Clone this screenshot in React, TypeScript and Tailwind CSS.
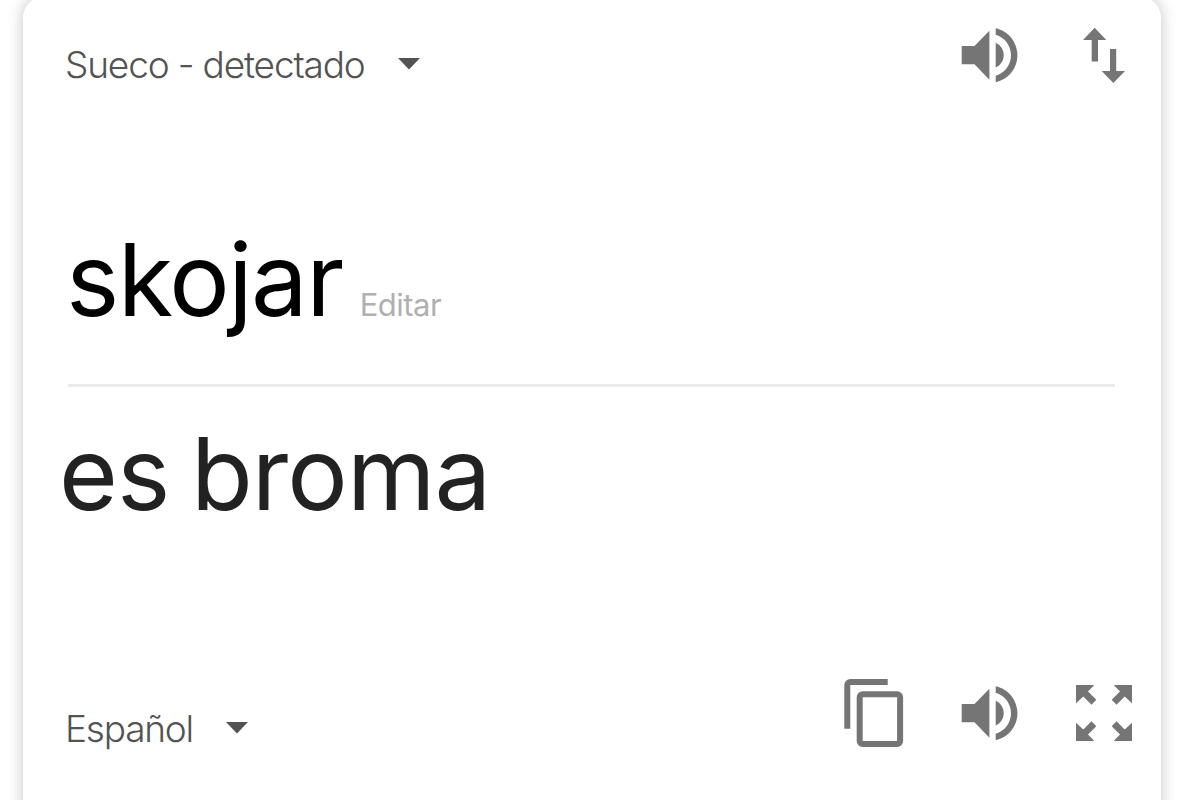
function SpeakerIcon() {
  return (
    <svg viewBox="0 0 60 60" className="h-[60px] w-[60px]" fill="currentColor">
      <path d="M1.7 20.1H14.5L29.4 4.7V53.7L14.5 38.3H1.7z" />
      <path d="M35.7 16.8C40.6 19 43.7 23.7 43.7 29.2S40.6 39.3 35.7 41.4z" />
      <path d="M35.7 2.3C48.2 5 57.4 16 57.4 29.3S48.2 53.5 35.7 56.2V49.7C44.6 47.2 51 39 51 29.3S44.6 11.3 35.7 8.8z" />
    </svg>
  );
}

function SwapIcon() {
  return (
    <svg viewBox="0 0 50 60" className="h-[60px] w-[50px]" fill="currentColor">
      <path d="M14.7 1.7L26.3 14H18V35.5H11.7V14H3z" />
      <path d="M30 23H36.2V45H45L33.3 57L21.7 45H30z" />
    </svg>
  );
}

function CopyIcon() {
  return (
    <svg viewBox="0 0 66 74" className="h-[74px] w-[66px]" fill="none" stroke="currentColor" strokeWidth="6">
      <path d="M7.3 52.7V9A3 3 0 0 1 10.3 6H47.7" />
      <rect x="19.7" y="18.3" width="40.4" height="49.7" rx="3" />
    </svg>
  );
}

function ExpandIcon() {
  const arrow = "M2 2H20.3L14 8.5L22.3 16.7L17.5 21.7L9.3 13.5L2 20.3z";
  return (
    <svg viewBox="0 0 60 60" className="h-[60px] w-[60px]" fill="currentColor">
      <path d={arrow} />
      <path d={arrow} transform="matrix(-1 0 0 1 60 0)" />
      <path d={arrow} transform="matrix(1 0 0 -1 0 60)" />
      <path d={arrow} transform="matrix(-1 0 0 -1 60 60)" />
    </svg>
  );
}

function Caret() {
  return (
    <svg viewBox="0 0 22 12" className="mb-[3px] h-3 w-[22px] text-[#535353]" fill="currentColor">
      <path d="M0 0H22L11 11.5z" />
    </svg>
  );
}

export default function App() {
  return (
    <div className="h-[800px] overflow-hidden bg-white font-['Inter',sans-serif]">
      <main className="-mt-1 ml-[23px] h-[840px] w-[1138px] rounded-[22px] bg-white text-[#757575] shadow-[0_0_16px_rgba(0,0,0,0.24)]">
        <header className="flex h-[200px] items-start pt-[30px]">
          <button className="ml-[42px] mt-[15px] flex h-12 items-center text-[#535353]">
            <span className="w-[333px] whitespace-nowrap text-left text-[37px] font-light leading-[48px] tracking-[-1.15px]">
              Sueco - detectado
            </span>
            <Caret />
          </button>
          <div className="ml-auto mr-[31px] flex gap-[60px]">
            <SpeakerIcon />
            <SwapIcon />
          </div>
        </header>

        <section className="ml-[45px] flex h-[191px] w-[1047px] items-baseline gap-[17px] border-b-[3px] border-[#ebebeb] pt-[23px]">
          <h1 className="-ml-[2px] text-[101px] leading-[120px] tracking-[-1.6px] text-black">skojar</h1>
          <button className="text-[31px] tracking-[-0.5px] text-[#b0b0b0]">Editar</button>
        </section>

        <section className="ml-[36px] h-[289px] pt-[26px]">
          <p className="whitespace-nowrap text-[101px] leading-[120px] tracking-[-0.9px] [word-spacing:-6px] text-[#222222]">
            es broma
          </p>
        </section>

        <footer className="flex items-start">
          <button className="ml-[42px] mt-[29px] flex h-12 items-center text-[#535353]">
            <span className="w-[161px] whitespace-nowrap text-left text-[37px] font-light leading-[48px] tracking-[-1.2px]">
              Español
            </span>
            <Caret />
          </button>
          <div className="ml-auto mr-[27px] flex items-start">
            <CopyIcon />
            <div className="ml-[54px] mt-[8px]">
              <SpeakerIcon />
            </div>
            <div className="ml-[54px] mt-[7px]">
              <ExpandIcon />
            </div>
          </div>
        </footer>
      </main>
    </div>
  );
}
